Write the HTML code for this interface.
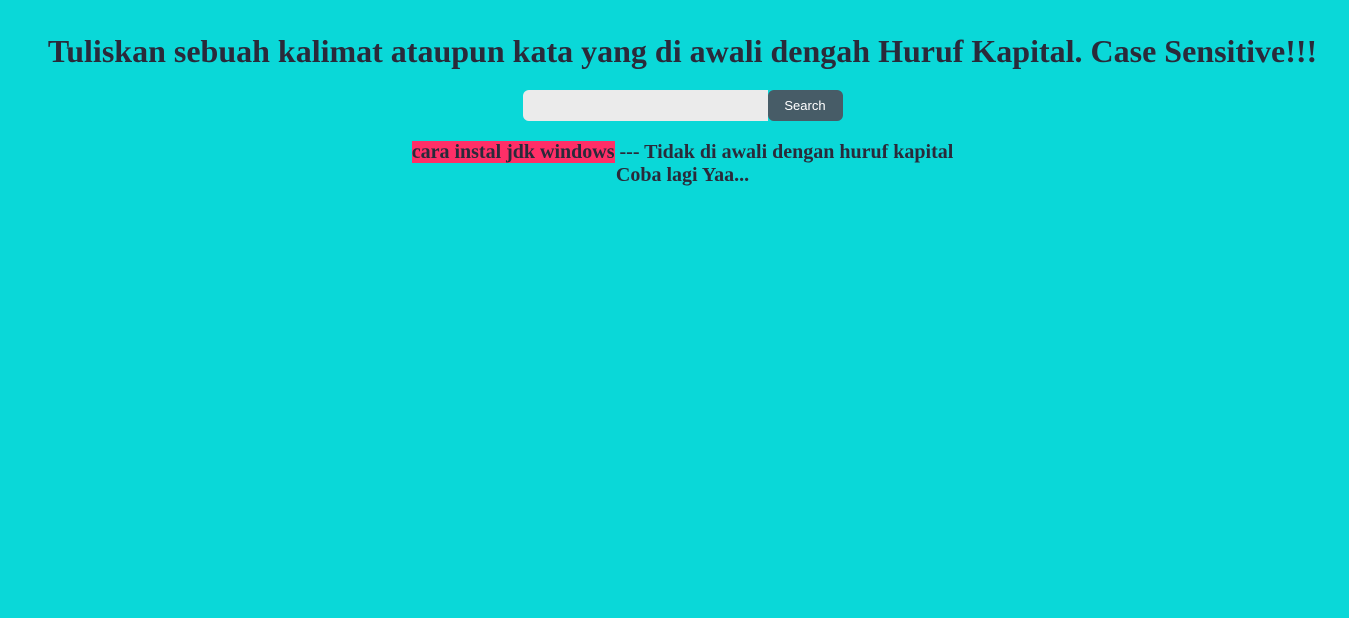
<!DOCTYPE html>
<html><head><style>
html,body{margin:0;padding:0;background:#0ad8d8;width:1349px;height:618px;overflow:hidden}
.wrap{padding-left:16px;text-align:center;font-family:"Liberation Serif",serif;color:#2a2a3a}
h1{margin:0;padding-top:33px;font-size:32px;line-height:36px;font-weight:bold;white-space:nowrap}
.search{margin:21px auto 0;width:320px;height:31px;display:flex}
.search .in{width:245px;height:31px;background:#ebebeb;border-radius:6px 0 0 6px}
.search .btn{width:75px;height:31px;background:#475c67;color:#fff;border-radius:6px;font-family:"Liberation Sans",sans-serif;font-size:13px;line-height:31px}
.res{margin-top:20px;font-size:20px;font-weight:bold;line-height:23px}
.hl{background:#ff2f67}
</style></head><body><div class="wrap">
<h1>Tuliskan sebuah kalimat ataupun kata yang di awali dengah Huruf Kapital. Case Sensitive!!!</h1>
<div class="search"><div class="in"></div><div class="btn">Search</div></div>
<div class="res"><span class="hl">cara instal jdk windows</span> --- Tidak di awali dengan huruf kapital<br>Coba lagi Yaa...</div>
</div></body></html>
